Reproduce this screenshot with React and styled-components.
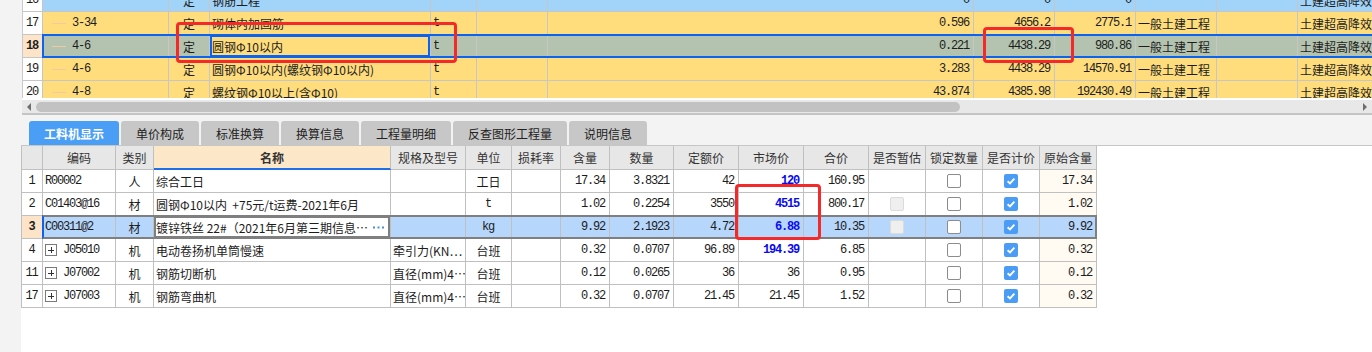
import React from "react";
import styled, { createGlobalStyle } from "styled-components";

const GlobalStyle = createGlobalStyle`
  html, body { margin: 0; padding: 0; background: #f3f3f3; }
  body {
    font-family: "Noto Sans CJK SC", "Liberation Sans", sans-serif;
    font-size: 12px;
    color: #1c1c1c;
  }
  * { box-sizing: border-box; }
`;

const YELLOW = "#ffdd7c";
const LIGHT_BLUE = "#a2d4f9";
const SEL_GREEN = "#b4c3af";
const PEACH = "#fde4c8";
const SEL_BLUE = "#b6d6fb";
const CREAM = "#fffaf2";

const Page = styled.div`
  position: relative;
  width: 1372px;
  height: 352px;
  overflow: hidden;
  padding-left: 21px;
  display: flex;
  flex-direction: column;
  background: #f3f3f3;
`;

/* ---------- upper grid ---------- */

const TopSection = styled.div`
  margin-left: 1px;
`;

const Viewport = styled.div`
  height: 98px;
  overflow: hidden;
  background: #fff;
  border-left: 1px solid #c9c9c9;
`;

const RowStack = styled.div`
  margin-top: -11px;
  width: 1600px;
`;

const GridRow = styled.div`
  position: relative;
  display: flex;
`;

const Cell = styled.div`
  flex: 0 0 ${(p) => p.$w}px;
  height: ${(p) => p.$h || 23}px;
  display: flex;
  align-items: center;
  justify-content: ${(p) =>
    p.$align === "right" ? "flex-end" : p.$align === "center" ? "center" : "flex-start"};
  padding: 0 ${(p) => (p.$align === "right" ? 3 : 2)}px 0 2px;
  border-right: 1px solid ${(p) => p.$line || "#c6c6c6"};
  border-bottom: 1px solid ${(p) => p.$line || "#c6c6c6"};
  background: ${(p) => p.$bg || "#fff"};
  white-space: nowrap;
  overflow: hidden;
  font-weight: ${(p) => (p.$bold ? 700 : 400)};
  color: ${(p) => p.$color || "inherit"};
  box-shadow: ${(p) => p.$ring || "none"};
`;

const Num = styled.span`
  font-family: "Liberation Mono", "Noto Sans CJK SC", monospace;
  font-size: 12px;
  letter-spacing: -1.2px;
  padding-right: 1px;
`;

const TreeLine = styled.span`
  display: inline-block;
  width: 14px;
  height: 1px;
  background: #f3c9a2;
  margin: 0 6px 0 7px;
`;

const Frame = styled.div`
  position: absolute;
  top: -1px;
  bottom: 0;
  left: ${(p) => p.$left}px;
  right: ${(p) => p.$right || 0}px;
  border: 2px solid ${(p) => p.$color};
  border-left-color: #0b63ef;
  border-right-width: ${(p) => (p.$closed ? 2 : 0)}px;
  pointer-events: none;
`;

const ScrollTrack = styled.div`
  position: relative;
  height: 17px;
  border-top: 2px solid #fff;
  border-bottom: 2px solid #c4c4c4;
  background: #e8e8e8;
  display: flex;
  align-items: center;
  padding: 0 5px;
`;

const Arrow = styled.span`
  width: 0;
  height: 0;
  border-top: 4px solid transparent;
  border-bottom: 4px solid transparent;
  ${(p) => (p.$dir === "left" ? "border-right: 4px solid #6e6e6e;" : "border-left: 4px solid #6e6e6e;")}
`;

const Thumb = styled.div`
  margin-left: 5px;
  width: 924px;
  height: 10px;
  border-radius: 5px;
  background: #c2c2c2;
`;

const TrackSpacer = styled.div`
  flex: 1;
`;

/* ---------- tabs ---------- */

const TabBar = styled.div`
  display: flex;
  gap: 2px;
  padding: 6px 0 0 8px;
  height: 30px;
`;

const Tab = styled.div`
  height: 24px;
  padding: 0 15px;
  display: flex;
  align-items: center;
  border-radius: 3px 3px 0 0;
  background: ${(p) => (p.$active ? "#4a9ef6" : "#c7c7c7")};
  color: ${(p) => (p.$active ? "#fff" : "#222")};
  font-weight: ${(p) => (p.$active ? 700 : 400)};
  font-size: 12px;
`;

/* ---------- lower table ---------- */

const BottomArea = styled.div`
  flex: 1;
  background: #fff;
  border-top: 1px solid #c6c6c6;
`;

const Table = styled.div`
  display: inline-flex;
  flex-direction: column;
  border-left: 1px solid #c0c0c0;
`;

const HeadCell = styled(Cell)`
  justify-content: center;
  padding: 0;
  color: #333;
  border-bottom: ${(p) => (p.$accent ? "2px solid #1e6fe8" : "1px solid #c0c0c0")};
`;

const Box = styled.span`
  width: 14px;
  height: 14px;
  border-radius: 2px;
  border: 1px solid ${(p) => (p.$kind === "off" ? "#dcdcdc" : "#8c8c8c")};
  background: ${(p) => (p.$kind === "off" ? "#efefef" : "#fff")};
`;

const BlueBox = styled.span`
  width: 14px;
  height: 14px;
  border-radius: 2px;
  background: #4a9cf5;
  display: flex;
  align-items: center;
  justify-content: center;
`;

const Expander = styled.span`
  flex: 0 0 12px;
  width: 12px;
  height: 12px;
  border: 1px solid #7a7a7a;
  margin: 0 6px 0 0;
  position: relative;
  &::before, &::after {
    content: "";
    position: absolute;
    background: #333;
  }
  &::before { left: 2px; right: 2px; top: 4.5px; height: 1px; }
  &::after { top: 2px; bottom: 2px; left: 4.5px; width: 1px; }
`;

const MoreDots = styled.svg`
  margin-left: auto;
  margin-right: 4px;
  flex: 0 0 auto;
`;

const Mark = styled.div`
  position: absolute;
  left: ${(p) => p.$x}px;
  top: ${(p) => p.$y}px;
  width: ${(p) => p.$w}px;
  height: ${(p) => p.$h}px;
  border: 3px solid #f42a2a;
  border-radius: 4px;
  pointer-events: none;
`;

/* ---------- data ---------- */

const topCols = [20, 126, 41, 221, 46, 71, 426, 81, 81, 81, 81, 140];

const topRows = [
  { n: "16", tone: LIGHT_BLUE, code: "", name: "钢筋工程", unit: "", qty: "0", price: "0", total: "0", cat: "" },
  { n: "17", tone: YELLOW, code: "3-34", name: "砌体内加固筋", unit: "t", qty: "0.596", price: "4656.2", total: "2775.1", cat: "一般土建工程" },
  { n: "18", tone: SEL_GREEN, sel: true, code: "4-6", name: "圆钢Φ10以内", unit: "t", qty: "0.221", price: "4438.29", total: "980.86", cat: "一般土建工程" },
  { n: "19", tone: YELLOW, code: "4-6", name: "圆钢Φ10以内(螺纹钢Φ10以内)", unit: "t", qty: "3.283", price: "4438.29", total: "14570.91", cat: "一般土建工程" },
  { n: "20", tone: YELLOW, code: "4-8", name: "螺纹钢Φ10以上(含Φ10)", unit: "t", qty: "43.874", price: "4385.98", total: "192430.49", cat: "一般土建工程" },
];

const tabs = ["工料机显示", "单价构成", "标准换算", "换算信息", "工程量明细", "反查图形工程量", "说明信息"];

const cols = [
  { key: "n", title: "", w: 21 },
  { key: "code", title: "编码", w: 73 },
  { key: "kind", title: "类别", w: 38 },
  { key: "name", title: "名称", w: 237 },
  { key: "spec", title: "规格及型号", w: 75 },
  { key: "unit", title: "单位", w: 46 },
  { key: "loss", title: "损耗率", w: 49 },
  { key: "qty", title: "含量", w: 49 },
  { key: "amount", title: "数量", w: 64 },
  { key: "base", title: "定额价", w: 65 },
  { key: "market", title: "市场价", w: 65 },
  { key: "sum", title: "合价", w: 65 },
  { key: "est", title: "是否暂估", w: 57 },
  { key: "lock", title: "锁定数量", w: 57 },
  { key: "priced", title: "是否计价", w: 57 },
  { key: "orig", title: "原始含量", w: 57 },
];

const items = [
  { n: "1", code: "R00002", kind: "人", name: "综合工日", spec: "", unit: "工日", qty: "17.34", amount: "3.8321", base: "42", market: "120", hot: true, sum: "160.95", est: null },
  { n: "2", code: "C01403@16", kind: "材", name: "圆钢Φ10以内  +75元/t运费-2021年6月", spec: "", unit: "t", qty: "1.02", amount: "0.2254", base: "3550", market: "4515", hot: true, sum: "800.17", est: "off" },
  { n: "3", sel: true, code: "C00311@2", kind: "材", name: "镀锌铁丝 22#（2021年6月第三期信息⋯", spec: "", unit: "kg", qty: "9.92", amount: "2.1923", base: "4.72", market: "6.88", hot: true, sum: "10.35", est: "off" },
  { n: "4", tree: true, code: "J05010", kind: "机", name: "电动卷扬机单筒慢速", spec: "牵引力(KN⋯", unit: "台班", qty: "0.32", amount: "0.0707", base: "96.89", market: "194.39", hot: true, sum: "6.85", est: null },
  { n: "11", tree: true, code: "J07002", kind: "机", name: "钢筋切断机", spec: "直径(mm)4⋯", unit: "台班", qty: "0.12", amount: "0.0265", base: "36", market: "36", sum: "0.95", est: null },
  { n: "17", tree: true, code: "J07003", kind: "机", name: "钢筋弯曲机", spec: "直径(mm)4⋯", unit: "台班", qty: "0.32", amount: "0.0707", base: "21.45", market: "21.45", sum: "1.52", est: null },
];

/* ---------- pieces ---------- */

function Check() {
  return (
    <BlueBox>
      <svg width="10" height="10" viewBox="0 0 10 10">
        <path d="M1.6 5.2 L4 7.4 L8.4 2.6" fill="none" stroke="#fff" strokeWidth="1.9" />
      </svg>
    </BlueBox>
  );
}

function Dots() {
  return (
    <MoreDots width="11" height="3" viewBox="0 0 11 3">
      <rect x="0" y="0.5" width="2" height="2" fill="#4a8fd8" />
      <rect x="4.5" y="0.5" width="2" height="2" fill="#4a8fd8" />
      <rect x="9" y="0.5" width="2" height="2" fill="#4a8fd8" />
    </MoreDots>
  );
}

function TopRow({ row }) {
  const w = topCols;
  const bg = row.tone;
  return (
    <GridRow>
      <Cell $w={w[0]} $align="center" $bg={row.sel ? PEACH : "#fff"} $bold={row.sel}>
        <Num>{row.n}</Num>
      </Cell>
      <Cell $w={w[1]} $bg={bg}>
        {row.code && <TreeLine />}
        <Num>{row.code}</Num>
      </Cell>
      <Cell $w={w[2]} $bg={bg} $align="center">定</Cell>
      <Cell
        $w={w[3]}
        $bg={row.sel ? YELLOW : bg}
        $ring={row.sel ? "inset 0 0 0 2px #0b63ef" : "none"}
      >
        {row.name}
      </Cell>
      <Cell $w={w[4]} $bg={bg}><Num>{row.unit}</Num></Cell>
      <Cell $w={w[5]} $bg={bg} />
      <Cell $w={w[6]} $bg={bg} $align="right"><Num>{row.qty}</Num></Cell>
      <Cell $w={w[7]} $bg={bg} $align="right"><Num>{row.price}</Num></Cell>
      <Cell $w={w[8]} $bg={bg} $align="right"><Num>{row.total}</Num></Cell>
      <Cell $w={w[9]} $bg={bg}>{row.cat}</Cell>
      <Cell $w={w[10]} $bg={bg} />
      <Cell $w={w[11]} $bg={bg}>土建超高降效</Cell>
      {row.sel && <Frame $left={19} $color="#0b63ef" />}
    </GridRow>
  );
}

function ItemRow({ item }) {
  const bg = item.sel ? SEL_BLUE : "#fff";
  const c = (i) => cols[i].w;
  const L = "#c0c0c0";
  return (
    <GridRow>
      <Cell $w={c(0)} $line={L} $align="center" $bg={item.sel ? PEACH : "#fff"} $bold={item.sel}>
        <Num>{item.n}</Num>
      </Cell>
      <Cell $w={c(1)} $line={L} $bg={bg}>
        {item.tree && <Expander />}
        <Num>{item.code}</Num>
      </Cell>
      <Cell $w={c(2)} $line={L} $bg={bg} $align="center">{item.kind}</Cell>
      <Cell
        $w={c(3)}
        $line={L}
        $bg={item.sel ? "#fff" : bg}
        $ring={item.sel ? "inset 0 0 0 2px #7f7f7f" : "none"}
      >
        <span style={{ whiteSpace: "pre" }}>{item.name}</span>
        {item.sel && <Dots />}
      </Cell>
      <Cell $w={c(4)} $line={L} $bg={bg}>{item.spec}</Cell>
      <Cell $w={c(5)} $line={L} $bg={bg} $align="center">
        {/^[a-z]+$/.test(item.unit) ? <Num>{item.unit}</Num> : item.unit}
      </Cell>
      <Cell $w={c(6)} $line={L} $bg={bg} />
      <Cell $w={c(7)} $line={L} $bg={bg} $align="right"><Num>{item.qty}</Num></Cell>
      <Cell $w={c(8)} $line={L} $bg={bg} $align="right"><Num>{item.amount}</Num></Cell>
      <Cell $w={c(9)} $line={L} $bg={bg} $align="right"><Num>{item.base}</Num></Cell>
      <Cell $w={c(10)} $line={L} $bg={bg} $align="right" $bold={item.hot} $color={item.hot ? "#0a0af0" : undefined}>
        <Num>{item.market}</Num>
      </Cell>
      <Cell $w={c(11)} $line={L} $bg={bg} $align="right"><Num>{item.sum}</Num></Cell>
      <Cell $w={c(12)} $line={L} $bg={bg} $align="center">
        {item.est && <Box $kind="off" />}
      </Cell>
      <Cell $w={c(13)} $line={L} $bg={bg} $align="center"><Box /></Cell>
      <Cell $w={c(14)} $line={L} $bg={bg} $align="center"><Check /></Cell>
      <Cell $w={c(15)} $line={L} $bg={item.sel ? SEL_BLUE : CREAM} $align="right">
        <Num>{item.qty}</Num>
      </Cell>
      {item.sel && <Frame $left={20} $color="#7f7f7f" $closed />}
    </GridRow>
  );
}

export default function App() {
  return (
    <>
      <GlobalStyle />
      <Page>
        <TopSection>
          <Viewport>
            <RowStack>
              {topRows.map((r) => (
                <TopRow key={r.n} row={r} />
              ))}
            </RowStack>
          </Viewport>
          <ScrollTrack>
            <Arrow $dir="left" />
            <Thumb />
            <TrackSpacer />
            <Arrow $dir="right" />
          </ScrollTrack>
        </TopSection>

        <TabBar>
          {tabs.map((t, i) => (
            <Tab key={t} $active={i === 0}>{t}</Tab>
          ))}
        </TabBar>

        <BottomArea>
          <Table>
            <GridRow>
              {cols.map((col) => (
                <HeadCell
                  key={col.key}
                  $w={col.w}
                  $h={24}
                  $line="#c0c0c0"
                  $bg={col.key === "name" ? "#fde7c9" : "#e7e7e7"}
                  $bold={col.key === "name"}
                  $accent={col.key === "name"}
                >
                  {col.title}
                </HeadCell>
              ))}
            </GridRow>
            {items.map((it) => (
              <ItemRow key={it.n + it.code} item={it} />
            ))}
          </Table>
        </BottomArea>

        <Mark $x={176} $y={22} $w={281} $h={41} />
        <Mark $x={983} $y={27} $w={91} $h={36} />
        <Mark $x={735} $y={184} $w={86} $h={56} />
      </Page>
    </>
  );
}
